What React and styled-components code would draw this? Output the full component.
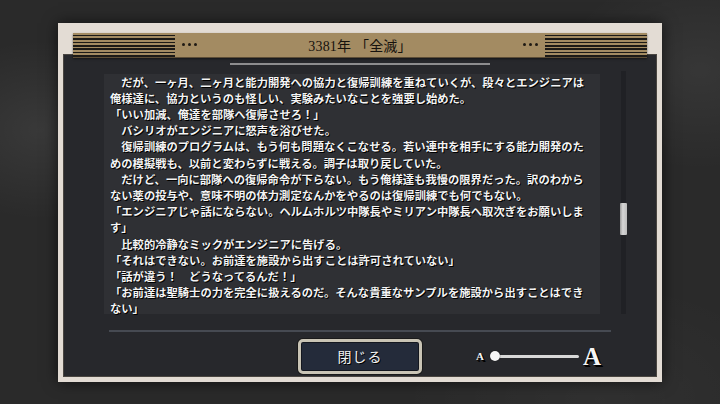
import React from "react";
import styled, { createGlobalStyle } from "styled-components";

const lines = [
  "\u3000だが、一ヶ月、二ヶ月と能力開発への協力と復帰訓練を重ねていくが、段々とエンジニアは",
  "俺様達に、協力というのも怪しい、実験みたいなことを強要し始めた。",
  "「いい加減、俺達を部隊へ復帰させろ！」",
  "\u3000バシリオがエンジニアに怒声を浴びせた。",
  "\u3000復帰訓練のプログラムは、もう何も問題なくこなせる。若い連中を相手にする能力開発のた",
  "めの模擬戦も、以前と変わらずに戦える。調子は取り戻していた。",
  "\u3000だけど、一向に部隊への復帰命令が下らない。もう俺様達も我慢の限界だった。訳のわから",
  "ない薬の投与や、意味不明の体力測定なんかをやるのは復帰訓練でも何でもない。",
  "「エンジニアじゃ話にならない。ヘルムホルツ中隊長やミリアン中隊長へ取次ぎをお願いしま",
  "す」",
  "\u3000比較的冷静なミックがエンジニアに告げる。",
  "「それはできない。お前達を施設から出すことは許可されていない」",
  "「話が違う！\u3000どうなってるんだ！」",
  "「お前達は聖騎士の力を完全に扱えるのだ。そんな貴重なサンプルを施設から出すことはでき",
  "ない」",
];

const GlobalStyle = createGlobalStyle`
  html, body {
    margin: 0;
    padding: 0;
    height: 100%;
  }
  body {
    background-color: #2a2a2a;
    background-image:
      radial-gradient(ellipse 120px 90px at 40px 130px, rgba(255, 255, 255, 0.07), transparent),
      radial-gradient(ellipse 140px 100px at 700px 70px, rgba(255, 255, 255, 0.06), transparent),
      radial-gradient(ellipse 200px 120px at 600px 400px, rgba(255, 255, 255, 0.03), transparent);
    font-family: "Noto Sans CJK JP", sans-serif;
  }
  #root {
    height: 100%;
  }
`;

const Screen = styled.div`
  width: 720px;
  height: 404px;
  display: flex;
  align-items: center;
  justify-content: center;
`;

const Frame = styled.div`
  width: 604px;
  height: 359px;
  box-sizing: border-box;
  padding: 10px 5px 5px;
  background: #e3dcd4;
  display: flex;
  flex-direction: column;
  box-shadow: 0 0 14px rgba(0, 0, 0, 0.6);
`;

const Header = styled.div`
  position: relative;
  z-index: 1;
  height: 24px;
  margin: 0 10px;
  background: #a38b62;
  display: flex;
  align-items: center;
  border-bottom: 1px solid #5c4d36;
  box-shadow: 0 1px 2px rgba(0, 0, 0, 0.5);
`;

const Stripes = styled.div`
  width: 102px;
  align-self: stretch;
  background: repeating-linear-gradient(
    to bottom,
    #a38b62 0px,
    #a38b62 1.7px,
    #1c1a17 1.7px,
    #1c1a17 3.4px
  );
`;

const Dots = styled.div`
  display: flex;
  gap: 3px;
  margin: 0 7px;
  span {
    width: 3px;
    height: 3px;
    border-radius: 50%;
    background: #1e1a14;
  }
`;

const Title = styled.div`
  flex: 1;
  text-align: center;
  font-family: "Liberation Serif", "Noto Sans CJK JP", serif;
  font-size: 14px;
  color: #16120d;
  letter-spacing: 0.2px;
`;

const Panel = styled.div`
  flex: 1;
  margin-top: -4px;
  background: #27282c;
  border: 1px solid #4a4641;
  display: flex;
  flex-direction: column;
  align-items: stretch;
`;

const TopRule = styled.div`
  width: 260px;
  height: 2px;
  margin: 8px auto 0;
  background: #8d8d8f;
`;

const Body = styled.div`
  display: flex;
  margin: 6px 0 0 40px;
  height: 243px;
`;

const TextBox = styled.div`
  width: 496px;
  height: 240px;
  margin-top: 3px;
  box-sizing: border-box;
  padding-left: 6px;
  background: #2f3034;
`;

const Line = styled.div`
  white-space: nowrap;
  font-family: "Noto Sans CJK JP", sans-serif;
  font-weight: 700;
  font-size: 11.3px;
  line-height: 16.2px;
  color: #f4f4f4;
  text-shadow: 1px 1px 0 #000, 0 0 1px #000;
`;

const Track = styled.div`
  position: relative;
  width: 5px;
  margin-left: 21px;
  background: #202125;
`;

const Thumb = styled.div`
  position: absolute;
  left: -1px;
  top: 132px;
  width: 7px;
  height: 32px;
  background: linear-gradient(to right, #9a9a9a, #d6d6d6 40%, #bdbdbd);
  border-radius: 1px;
`;

const Separator = styled.div`
  height: 2px;
  margin: 16px 45px 0 45px;
  background: #464a52;
`;

const Controls = styled.div`
  display: grid;
  grid-template-columns: 1fr auto 1fr;
  align-items: center;
  margin-top: 7px;
`;

const CloseButton = styled.button`
  grid-column: 2;
  width: 124px;
  height: 35px;
  box-sizing: border-box;
  padding: 0;
  border: 3px solid #c9c4b5;
  border-radius: 5px;
  background: #242b3a;
  box-shadow: inset 0 0 0 1px #14171f, 0 0 0 1px #1a1a1a;
  color: #f2f2f2;
  font-family: "Noto Sans CJK JP", sans-serif;
  font-size: 14px;
  letter-spacing: 1px;
  text-shadow: 1px 1px 0 #000;
`;

const Slider = styled.div`
  grid-column: 3;
  justify-self: start;
  margin-left: 54px;
  display: flex;
  align-items: center;
`;

const Glyph = styled.span`
  font-family: "Liberation Serif", serif;
  font-weight: 700;
  font-size: ${(p) => p.$size}px;
  line-height: 1;
  color: #f5f5f5;
  text-shadow: 1px 1px 0 #000, 2px 2px 0 #000;
`;

const Rail = styled.div`
  position: relative;
  width: 84px;
  height: 3px;
  margin: 0 4px 0 11px;
  border-radius: 2px;
  background: #d8d8d8;
`;

const Knob = styled.div`
  position: absolute;
  left: -5px;
  top: -3.5px;
  width: 10px;
  height: 10px;
  border-radius: 50%;
  background: #f7f7f7;
  box-shadow: 0 0 1px #000;
`;

export default function App() {
  return (
    <>
      <GlobalStyle />
      <Screen>
        <Frame>
          <Header>
            <Stripes />
            <Dots>
              <span />
              <span />
              <span />
            </Dots>
            <Title>3381年 「全滅」</Title>
            <Dots>
              <span />
              <span />
              <span />
            </Dots>
            <Stripes />
          </Header>
          <Panel>
            <TopRule />
            <Body>
              <TextBox>
                {lines.map((l, i) => (
                  <Line key={i}>{l}</Line>
                ))}
              </TextBox>
              <Track>
                <Thumb />
              </Track>
            </Body>
            <Separator />
            <Controls>
              <CloseButton>閉じる</CloseButton>
              <Slider>
                <Glyph $size={11}>A</Glyph>
                <Rail>
                  <Knob />
                </Rail>
                <Glyph $size={25}>A</Glyph>
              </Slider>
            </Controls>
          </Panel>
        </Frame>
      </Screen>
    </>
  );
}
